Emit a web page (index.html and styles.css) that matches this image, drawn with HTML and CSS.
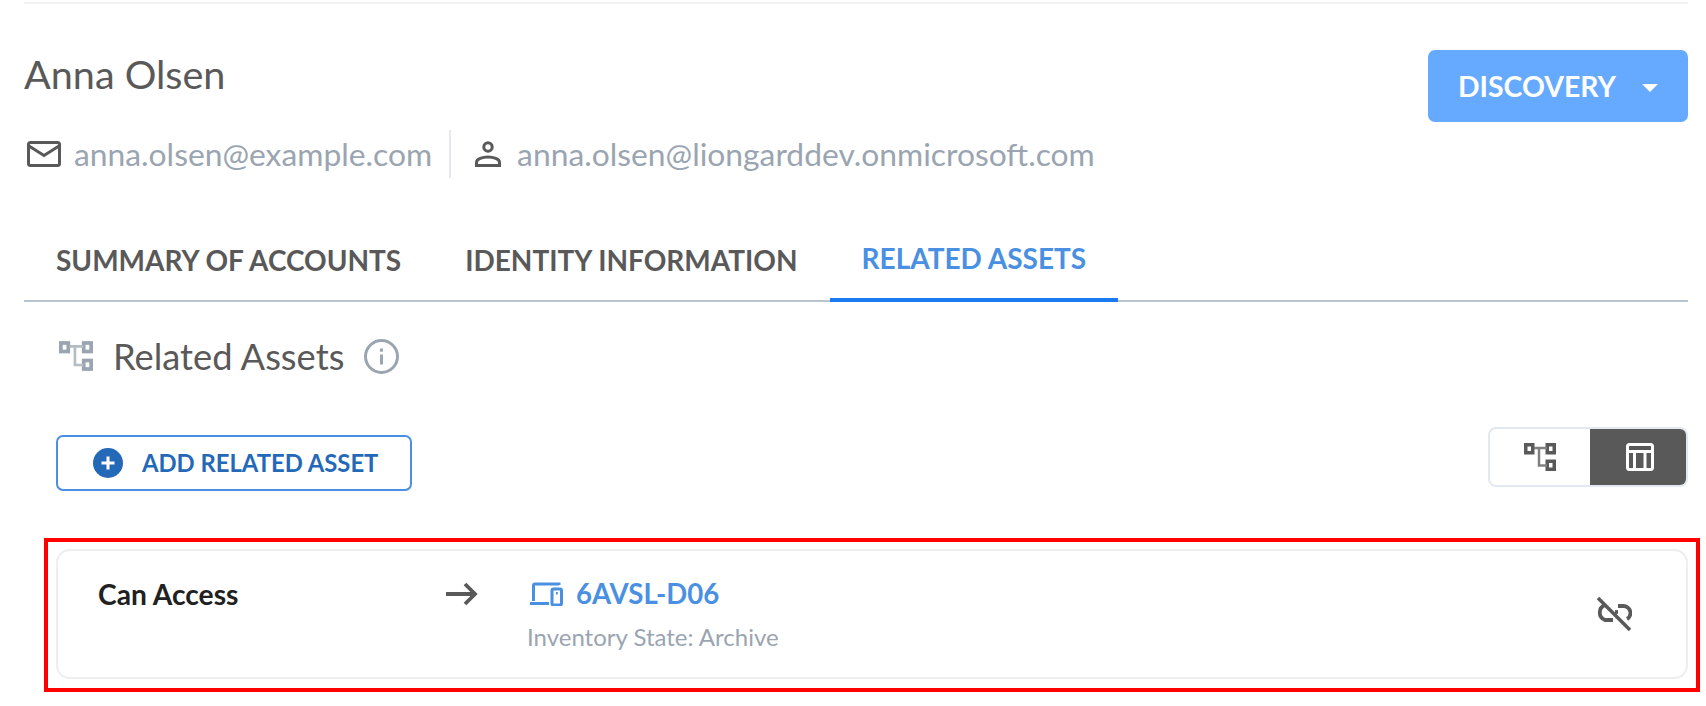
FILE: index.html
```html
<!DOCTYPE html>
<html lang="en">
<head>
<meta charset="utf-8">
<title>Anna Olsen</title>
<link rel="stylesheet" href="styles.css">
</head>
<body>
<main class="page">
  <header class="head">
    <div class="who">
      <h1 class="name">Anna Olsen</h1>
      <div class="ids">
        <span class="id id-first">
          <svg viewBox="0 0 34 26" width="34" height="26"><rect x="1.500" y="1.500" width="31" height="23" rx="2" fill="none" stroke="#595959" stroke-width="3"/><path d="M2 5l15 9.500L32 5" fill="none" stroke="#595959" stroke-width="3"/></svg>
          <span>anna.olsen@example.com</span>
        </span>
        <span class="id id-second">
          <svg viewBox="0 0 26 26" width="26" height="26"><circle cx="13" cy="6" r="4.200" fill="none" stroke="#595959" stroke-width="3"/><path d="M1.500 24.500v-3c0-3.500 6-5.500 11.500-5.500s11.500 2 11.500 5.500v3z" fill="none" stroke="#595959" stroke-width="3"/></svg>
          <span>anna.olsen@liongarddev.onmicrosoft.com</span>
        </span>
      </div>
    </div>
    <button class="discovery">DISCOVERY<span class="caret"></span></button>
  </header>

  <nav class="tabs">
    <a class="tab">SUMMARY OF ACCOUNTS</a>
    <a class="tab">IDENTITY INFORMATION</a>
    <a class="tab tab-on">RELATED ASSETS</a>
  </nav>

  <section class="body">
    <div class="title">
      <svg class="title-ic" viewBox="0 0 32 28" width="34" height="30"><g fill="none" stroke="#9aa5b1" stroke-width="3.500"><rect x="1.750" y="1.750" width="7" height="8"/><rect x="23.250" y="1.750" width="7" height="8"/><rect x="23.250" y="18.250" width="7" height="8"/></g><path d="M10 5h13M15 5v17.500h8" fill="none" stroke="#b4bcc5" stroke-width="2.500"/></svg>
      <h2>Related Assets</h2>
      <svg viewBox="0 0 35 35" width="35" height="35"><circle cx="17.500" cy="17.500" r="16" fill="none" stroke="#9aa5b1" stroke-width="3"/><rect x="16" y="15.500" width="3" height="10" fill="#9aa5b1"/><rect x="16" y="9.500" width="3" height="3.200" fill="#9aa5b1"/></svg>
    </div>

    <div class="tools">
      <button class="add">
        <svg viewBox="0 0 30 30" width="30" height="30"><circle cx="15" cy="15" r="15" fill="#2468b8"/><path d="M15 8.500v13M8.500 15h13" stroke="#fff" stroke-width="3"/></svg>
        <span>ADD RELATED ASSET</span>
      </button>
      <div class="toggle">
        <span class="opt">
          <svg viewBox="0 0 32 28" width="32" height="28"><g fill="none" stroke="#595959" stroke-width="3.500"><rect x="1.750" y="1.750" width="7" height="8"/><rect x="23.250" y="1.750" width="7" height="8"/><rect x="23.250" y="18.250" width="7" height="8"/></g><path d="M10 5h13M15 5v17.500h8" fill="none" stroke="#808080" stroke-width="2.500"/></svg>
        </span>
        <span class="opt opt-on">
          <svg viewBox="0 0 28 28" width="28" height="28"><rect x="1.500" y="1.500" width="25" height="25" rx="2" fill="none" stroke="#fff" stroke-width="3"/><path d="M2 8.500h24M8.500 8.500v18M19 8.500v18" stroke="#fff" stroke-width="3"/></svg>
        </span>
      </div>
    </div>

    <div class="mark">
      <article class="card">
        <strong class="rel">Can Access</strong>
        <svg class="arrow" viewBox="0 0 32 24" width="32" height="24"><path d="M0 12h29M19 2l10 10-10 10" fill="none" stroke="#595959" stroke-width="3.800"/></svg>
        <div class="asset">
          <a class="asset-name">
            <svg viewBox="0 0 33 24" width="33" height="24"><path d="M29 3V2H5a1.500 1.500 0 0 0-1.500 1.500V19M0 21.500h19" fill="none" stroke="#4a90e2" stroke-width="3"/><rect x="22" y="7" width="9.500" height="16" rx="1.500" fill="none" stroke="#4a90e2" stroke-width="3"/><rect x="26" y="10" width="1.800" height="2.500" fill="#4a90e2"/></svg>
            <span>6AVSL-D06</span>
          </a>
          <div class="state">Inventory State: Archive</div>
        </div>
        <svg class="unlink" viewBox="0 0 36 34" width="36" height="34"><g fill="none" stroke="#595959" stroke-width="3.800"><path d="M9 8a8 8 0 0 0 0 15h8"/><path d="M22 9h5a7 7 0 0 1 4 13"/><path d="M19 15h3"/></g><path d="M2 1l32 32" stroke="#595959" stroke-width="3.500"/></svg>
      </article>
    </div>
  </section>
</main>
</body>
</html>
```
FILE: styles.css
```css
* { box-sizing: border-box; }
html, body { margin: 0; height: 706px; overflow: hidden; background: #fff; }
body { font-family: Lato, "Open Sans", sans-serif; color: #595959; }
h1, h2 { margin: 0; font-weight: 400; }
.page { padding: 2px 18px 0 24px; }

.head {
  display: flex; justify-content: space-between; align-items: flex-start;
  border-top: 2px solid #f0f0f0;
  height: 212px;
}
.name { font-size: 39.6px; line-height: 48px; margin-top: 46px; }
.ids { display: flex; align-items: center; margin-top: 32px; height: 48px; font-size: 31.8px; color: #9aa5b1; }
.id { display: flex; align-items: center; height: 48px; }
.id-first { padding: 0 17px 0 3px; border-right: 2px solid #e6e8eb; }
.id-first svg { margin-right: 13px; }
.id-second { padding-left: 24px; }
.id-second svg { margin-right: 16px; }
.discovery {
  display: flex; align-items: center;
  width: 260px; height: 72px; margin-top: 46px;
  padding: 0 0 0 30px;
  border: 0; border-radius: 7px;
  background: #66aaff; color: #fff;
  font: 700 28.4px Lato, sans-serif;
}
.caret { margin-left: 26px; margin-top: 4px; border: 8px solid transparent; border-top-color: #fff; border-bottom: 0; }

.tabs { display: flex; height: 88px; border-bottom: 2px solid #b8c4ce; }
.tab {
  display: flex; align-items: center; padding: 4px 32px 0; height: 88px;
  font-size: 28px; font-weight: 700;
}
.tab-on { color: #4a90e2; border-bottom: 4px solid #1a7bf0; }

.body { padding-left: 32px; }
.title { display: flex; align-items: center; height: 64px; margin-top: 22px; }
.title-ic { margin-left: 3px; }
.title h2 { font-size: 36.3px; margin: 0 20px; }
.tools { display: flex; justify-content: space-between; align-items: flex-start; margin-top: 39px; height: 60px; }
.add {
  display: flex; align-items: center; width: 356px; height: 56px; margin-top: 8px; padding: 0 0 0 35px;
  background: #fff; border: 2px solid #4a90e2; border-radius: 7px;
  color: #2468b8; font: 700 23.8px Lato, sans-serif;
}
.add svg { margin-right: 19px; }
.toggle { display: flex; width: 200px; height: 60px; border: 2px solid #e4e8f0; border-radius: 8px; overflow: hidden; }
.opt { flex: 1; display: flex; align-items: center; justify-content: center; }
.opt-on { flex: 0 0 96px; padding-left: 3px; background: #595959; }

.mark { margin: 51px -12px 0 -12px; padding: 7px 8px 9px; border: 4px solid #f00; height: 154px; }
.card {
  display: flex; align-items: flex-start; height: 130px; padding: 0 0 0 40px; position: relative;
  border: 2px solid #eee; border-radius: 14px; background: #fff;
}
.rel { width: 348px; margin-top: 26px; font-size: 28.2px; font-weight: 700; color: #212121; line-height: 34px; }
.arrow { margin-top: 31px; }
.asset { margin-left: 49px; margin-top: 26px; }
.asset-name { display: flex; align-items: center; color: #4a90e2; font-size: 27.6px; font-weight: 700; line-height: 34px; }
.asset-name svg { margin: 0 13px 0 3px; }
.state { margin-top: 12px; font-size: 24px; color: #9aa5b1; line-height: 28px; }
.unlink { position: absolute; right: 54px; top: 46px; }
```
